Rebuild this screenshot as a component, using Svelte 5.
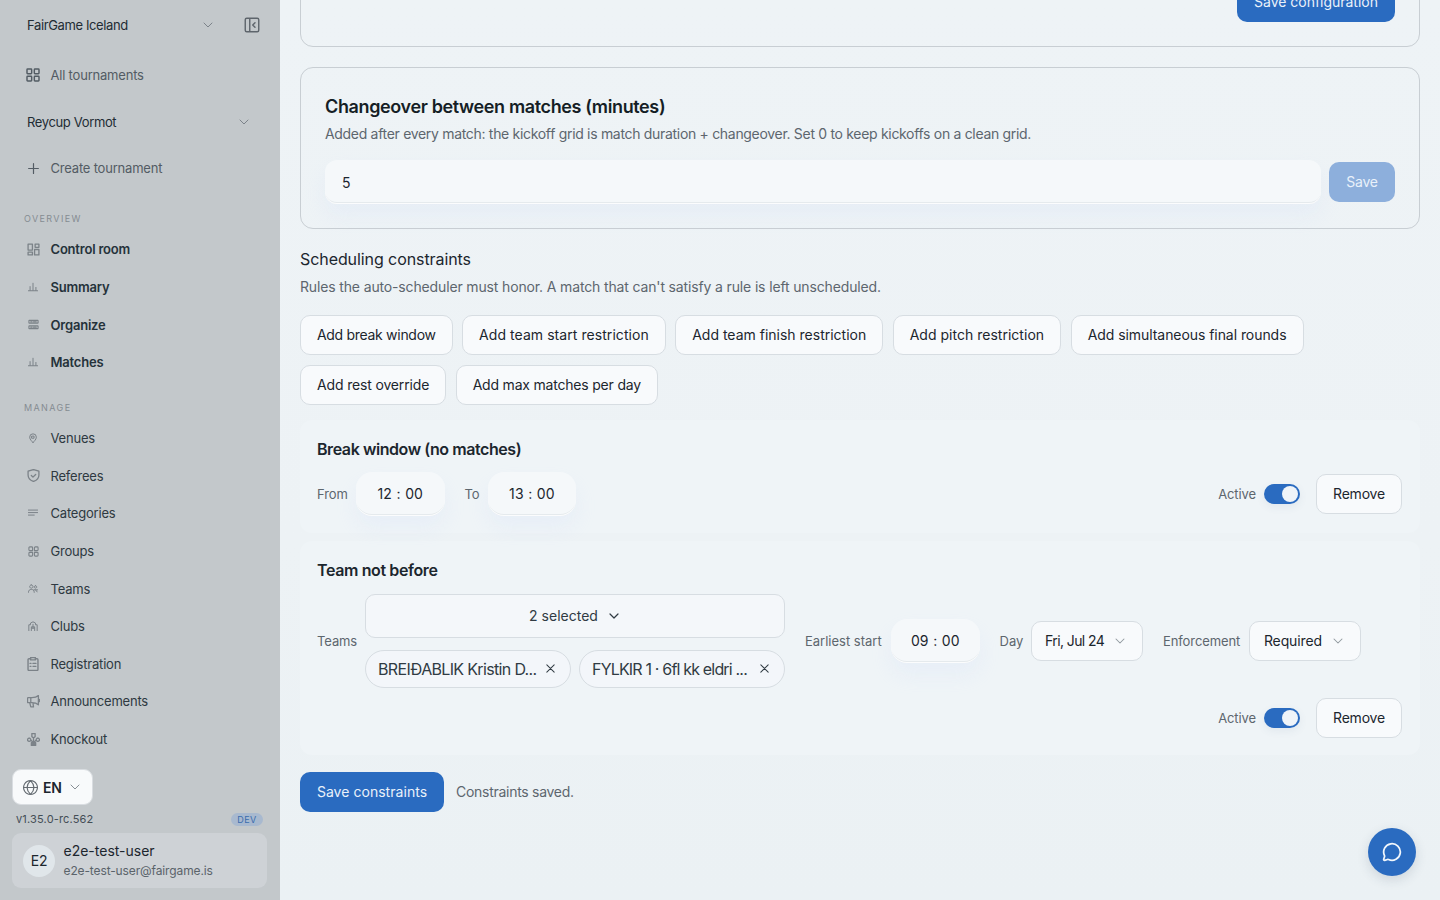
<script lang="ts">
  interface NavItem {
    label: string;
    icon: string;
    size?: number;
  }

  // 24x24 stroke icons
  const icons: Record<string, string> = {
    grid: 'M4 3h5a1 1 0 0 1 1 1v5a1 1 0 0 1-1 1H4a1 1 0 0 1-1-1V4a1 1 0 0 1 1-1zM15 3h5a1 1 0 0 1 1 1v5a1 1 0 0 1-1 1h-5a1 1 0 0 1-1-1V4a1 1 0 0 1 1-1zM4 14h5a1 1 0 0 1 1 1v5a1 1 0 0 1-1 1H4a1 1 0 0 1-1-1v-5a1 1 0 0 1 1-1zM15 14h5a1 1 0 0 1 1 1v5a1 1 0 0 1-1 1h-5a1 1 0 0 1-1-1v-5a1 1 0 0 1 1-1z',
    plus: 'M12 3v18M3 12h18',
    chevron: 'M4 8l8 8 8-8',
    collapse: 'M5 3h14a2 2 0 0 1 2 2v14a2 2 0 0 1-2 2H5a2 2 0 0 1-2-2V5a2 2 0 0 1 2-2zM9 3v18M16 9l-3 3 3 3',
    dashboard: 'M2 2h8v11H2zM15 2h7v6h-7zM14 12h8v10h-8zM2 17h8v5H2z',
    chart: 'M1 21h22M5 20v-9M12 20V3M19 20v-7',
    rows: 'M3 3h18a1 1 0 0 1 1 1v4a1 1 0 0 1-1 1H3a1 1 0 0 1-1-1V4a1 1 0 0 1 1-1zM3 15h18a1 1 0 0 1 1 1v4a1 1 0 0 1-1 1H3a1 1 0 0 1-1-1v-4a1 1 0 0 1 1-1zM6 6h3M12 6h6M6 18h3M12 18h6',
    pin: 'M12 23c-2-3-8-7-8-13a8 8 0 0 1 16 0c0 6-6 10-8 13zM9.500 7.500h5v5h-5z',
    shield: 'M12 1l10 3v7c0 6-4 10-10 12-6-2-10-6-10-12V4zM8 12l3 3 5-5',
    lines: 'M1 5h22M1 11h22M1 17h14',
    clover: 'M4 2h4a2 2 0 0 1 2 2v6H4a2 2 0 0 1-2-2V4a2 2 0 0 1 2-2zM16 2h4a2 2 0 0 1 2 2v4a2 2 0 0 1-2 2h-6V4a2 2 0 0 1 2-2zM4 14h6v6a2 2 0 0 1-2 2H4a2 2 0 0 1-2-2v-4a2 2 0 0 1 2-2zM14 14h6a2 2 0 0 1 2 2v4a2 2 0 0 1-2 2h-4a2 2 0 0 1-2-2z',
    people: 'M8 2a4 4 0 1 0 .01 0M18 4a3 3 0 1 0 .01 0M1 20c0-5 3-7 7-7s7 2 7 7M14 14h9M18 14l4 5',
    building: 'M2 23V9h4V5l6-3 6 3v4h4v14M8 23v-9h8v9M12 8v10M9 17h6',
    clipboard: 'M8 3H5a1.500 1.500 0 0 0-1.500 1.500v17A1.500 1.500 0 0 0 5 23h14a1.500 1.500 0 0 0 1.500-1.500v-17A1.500 1.500 0 0 0 19 3h-3M8 1h8v4H8zM7 11h1.500M12 11h5M7 16h1.500M12 16h5',
    megaphone: 'M2 5h7c5 0 9-1 12-4v17c-3-3-7-4-12-4H2a1 1 0 0 1-1-1V6a1 1 0 0 1 1-1zM7 5v9M5 14l2 8h5l-1-7M23 8v4',
    knockout: 'M9 1h6v6l-3 2-3-2zM4 9.500a3 3 0 1 0 .01 0M20 9.500a3 3 0 1 0 .01 0M8 18h8v5H8zM12 9v9M7 13l4 4M17 13l-4 4M10 20.500h4',
    globe: 'M12 1a11 11 0 1 0 .01 0M1 12h22M12 1c-7 7-7 15 0 22M12 1c7 7 7 15 0 22',
    close: 'M4 4l16 16M20 4L4 20',
    chat: 'M2.992 16.342a2 2 0 0 1 .094 1.167l-1.065 3.290a1 1 0 0 0 1.236 1.168l3.413-.998a2 2 0 0 1 1.099.092 10 10 0 1 0-4.777-4.719'
  };

  const overview: NavItem[] = [
    { label: 'Control room', icon: 'dashboard', size: 13 },
    { label: 'Summary', icon: 'chart', size: 10 },
    { label: 'Organize', icon: 'rows', size: 11 },
    { label: 'Matches', icon: 'chart', size: 10 }
  ];

  const manage: NavItem[] = [
    { label: 'Venues', icon: 'pin', size: 10 },
    { label: 'Referees', icon: 'shield', size: 13 },
    { label: 'Categories', icon: 'lines', size: 10 },
    { label: 'Groups', icon: 'clover', size: 11 },
    { label: 'Teams', icon: 'people', size: 10 },
    { label: 'Clubs', icon: 'building', size: 10 },
    { label: 'Registration', icon: 'clipboard', size: 14 },
    { label: 'Announcements', icon: 'megaphone', size: 13 },
    { label: 'Knockout', icon: 'knockout', size: 13 }
  ];

  const constraintTypes = [
    { label: 'Add break window', width: 152.6, tracking: -0.29 },
    { label: 'Add team start restriction', width: 203.5, tracking: 0.06 },
    { label: 'Add team finish restriction', width: 207.9, tracking: 0 },
    { label: 'Add pitch restriction', width: 168.2, tracking: 0.02 },
    { label: 'Add simultaneous final rounds', width: 233, tracking: -0.06 },
    { label: 'Add rest override', width: 146.2, tracking: -0.16 },
    { label: 'Add max matches per day', width: 202, tracking: -0.2 }
  ];

  let changeover = $state('5');
  let breakActive = $state(true);
  let teamActive = $state(true);
  let teams = $state([
    { name: 'BREIÐABLIK Kristin D...', tracking: -0.66 },
    { name: 'FYLKIR 1 · 6fl kk eldri ...', tracking: -0.82 }
  ]);
</script>

{#snippet icon(name: string, size = 14, stroke = 2)}
  <svg width={size} height={size} viewBox="0 0 24 24" fill="none" stroke="currentColor" stroke-width={stroke} stroke-linecap="round" stroke-linejoin="round">
    <path d={icons[name]} />
  </svg>
{/snippet}

{#snippet navLink(item: NavItem)}
  <a class="nav-item" href="#{item.icon}">
    <span class="nav-icon">{@render icon(item.icon, item.size, 2.4)}</span>
    <span>{item.label}</span>
  </a>
{/snippet}

{#snippet time(hours: string, minutes: string)}
  <div class="time"><span>{hours}</span><span class="colon">:</span><span>{minutes}</span></div>
{/snippet}

<div class="app">
  <aside class="sidebar">
    <div class="org">
      <span>FairGame Iceland</span>
      <span class="org-chevron">{@render icon('chevron', 12, 2)}</span>
      <button class="collapse" aria-label="Collapse sidebar">{@render icon('collapse', 18, 1.9)}</button>
    </div>
    <a class="top-link all" href="#all"><span class="nav-icon">{@render icon('grid', 16, 2.2)}</span><span>All tournaments</span></a>
    <div class="tournament">
      <span>Reycup Vormot</span>
      {@render icon('chevron', 12, 2)}
    </div>
    <a class="top-link create" href="#create"><span class="nav-icon">{@render icon('plus', 13, 2.2)}</span><span>Create tournament</span></a>

    <div class="nav-label">OVERVIEW</div>
    <nav class="strong">
      {#each overview as item}
        {@render navLink(item)}
      {/each}
    </nav>
    <div class="nav-label">MANAGE</div>
    <nav>
      {#each manage as item}
        {@render navLink(item)}
      {/each}
    </nav>

    <div class="footer">
      <button class="lang">
        <span class="globe">{@render icon('globe', 15, 1.8)}</span>
        <span>EN</span>
        <span class="lang-chevron">{@render icon('chevron', 12, 1.9)}</span>
      </button>
      <div class="version"><span>v1.35.0-rc.562</span><span class="env">DEV</span></div>
      <div class="user">
        <div class="avatar">E2</div>
        <div class="user-text">
          <div class="user-name">e2e-test-user</div>
          <div class="user-mail">e2e-test-user@fairgame.is</div>
        </div>
      </div>
    </div>
  </aside>

  <main>
    <section class="card config">
      <button class="btn primary">Save configuration</button>
    </section>

    <section class="card changeover">
      <h2>Changeover between matches (minutes)</h2>
      <p>Added after every match: the kickoff grid is match duration + changeover. Set 0 to keep kickoffs on a clean grid.</p>
      <div class="field-row">
        <input class="field" bind:value={changeover} aria-label="Changeover" />
        <button class="btn primary save" disabled>Save</button>
      </div>
    </section>

    <h3>Scheduling constraints</h3>
    <p class="hint">Rules the auto-scheduler must honor. A match that can't satisfy a rule is left unscheduled.</p>

    <div class="adders">
      {#each constraintTypes as type}
        <button class="btn" style="width: {type.width}px; letter-spacing: {type.tracking}px">{type.label}</button>
      {/each}
    </div>

    <section class="panel">
      <h4>Break window (no matches)</h4>
      <div class="controls">
        <div class="group"><span class="label from">From</span>{@render time('12', '00')}</div>
        <div class="group"><span class="label to">To</span>{@render time('13', '00')}</div>
        <div class="actions">
          <span class="label">Active</span>
          <button class="switch" class:on={breakActive} aria-label="Active" onclick={() => (breakActive = !breakActive)}></button>
          <button class="btn remove">Remove</button>
        </div>
      </div>
    </section>

    <section class="panel second">
      <h4>Team not before</h4>
      <div class="controls">
        <div class="group teams">
          <span class="label">Teams</span>
          <div class="picker">
            <button class="picker-btn"><span>2 selected</span>{@render icon('chevron', 12, 2.4)}</button>
            <div class="chips">
              {#each teams as team, i}
                <div class="chip">
                  <span style="letter-spacing: {team.tracking}px">{team.name}</span>
                  <button aria-label="Remove team" onclick={() => teams.splice(i, 1)}>{@render icon('close', 11, 2.2)}</button>
                </div>
              {/each}
            </div>
          </div>
        </div>
        <div class="group"><span class="label earliest">Earliest start</span>{@render time('09', '00')}</div>
        <div class="group"><span class="label day">Day</span><button class="select date"><span>Fri, Jul 24</span>{@render icon('chevron', 12, 2.1)}</button></div>
        <div class="group"><span class="label enforcement">Enforcement</span><button class="select level"><span>Required</span>{@render icon('chevron', 12, 2.1)}</button></div>
        <div class="actions">
          <span class="label">Active</span>
          <button class="switch" class:on={teamActive} aria-label="Active" onclick={() => (teamActive = !teamActive)}></button>
          <button class="btn remove">Remove</button>
        </div>
      </div>
    </section>

    <div class="save-row">
      <button class="btn primary save-all">Save constraints</button>
      <span>Constraints saved.</span>
    </div>
  </main>

  <button class="chat" aria-label="Open chat">{@render icon('chat', 20, 2.1)}</button>
</div>

<style>
  :global(body) {
    background: #edf2f5;
    overflow: hidden;
  }

  .app {
    display: flex;
    height: 900px;
    overflow: hidden;
    font-family: Inter, 'Noto Sans', sans-serif;
    font-size: 14px;
    color: #1c262e;
    background: linear-gradient(180deg, #eef3f6, #edf2f5 60%, #ebf1f4);
  }

  .app *,
  .app *::after {
    box-sizing: border-box;
  }

  svg {
    display: block;
    flex-shrink: 0;
  }

  button,
  input {
    font: inherit;
    color: inherit;
    letter-spacing: inherit;
    margin: 0;
    padding: 0;
    border: 0;
    background: none;
  }

  a {
    color: inherit;
    text-decoration: none;
  }

  h2,
  h3,
  h4,
  p {
    margin: 0;
  }

  /* Sidebar */
  .sidebar {
    width: 280px;
    flex-shrink: 0;
    display: flex;
    flex-direction: column;
    background: #c3c8cb;
    font-size: 13px;
    letter-spacing: -0.2px;
  }

  .org {
    display: flex;
    align-items: center;
    height: 50px;
    padding: 0 19px 0 27px;
    letter-spacing: -0.38px;
    color: #222c34;
  }

  .org-chevron {
    margin-left: auto;
    margin-right: 29px;
    color: #7c838a;
  }

  .collapse {
    color: #5e656c;
  }

  .top-link,
  .nav-item {
    display: flex;
    align-items: center;
    gap: 9.5px;
    padding-left: 25px;
  }

  .top-link {
    color: #535c64;
  }

  .all {
    height: 50px;
  }

  .create {
    height: 48px;
  }

  .nav-icon {
    display: flex;
    justify-content: center;
    width: 16px;
  }

  .nav-item .nav-icon {
    color: #7b8288;
  }

  .tournament {
    display: flex;
    align-items: center;
    justify-content: space-between;
    height: 44px;
    padding: 0 30px 0 27px;
    letter-spacing: -0.36px;
    color: #222c34;
  }

  .tournament svg {
    color: #7c838a;
  }

  .nav-label {
    height: 38.57px;
    padding: 0 24px;
    line-height: 54px;
    font-size: 9px;
    letter-spacing: 1.38px;
    color: #858c92;
  }

  .nav-item {
    height: 37.6px;
    color: #2e3941;
  }

  .strong {
    font-weight: 600;
    letter-spacing: -0.2px;
  }

  .strong .nav-item {
    color: #25323a;
  }

  .footer {
    margin: auto 13px 12px 12px;
  }

  .lang {
    display: flex;
    align-items: center;
    width: 81px;
    height: 36px;
    padding: 0 10px;
    border: 1px solid #d9dde1;
    border-radius: 9px;
    background: #f8fafb;
    font-size: 14px;
    font-weight: 600;
  }

  .globe {
    margin-right: 5px;
    color: #656c72;
  }

  .lang-chevron {
    margin-left: 7px;
    color: #82898f;
  }

  .version {
    display: flex;
    align-items: center;
    justify-content: space-between;
    height: 28px;
    padding: 0 4px;
    font-size: 11px;
    letter-spacing: 0.17px;
    color: #444e56;
  }

  .env {
    width: 32px;
    border-radius: 7px;
    background: #a8b9cf;
    color: #3a6cad;
    font-size: 9px;
    line-height: 13px;
    letter-spacing: 0.5px;
    text-align: center;
  }

  .user {
    display: flex;
    align-items: center;
    gap: 8.5px;
    height: 55px;
    padding: 0 11px;
    border-radius: 9px;
    background: #ced2d6;
  }

  .avatar {
    width: 32px;
    height: 32px;
    border-radius: 50%;
    background: #e0e6ea;
    line-height: 32px;
    text-align: center;
    font-size: 14px;
  }

  .user-name {
    font-size: 14px;
    line-height: 20px;
    letter-spacing: 0;
  }

  .user-mail {
    font-size: 12px;
    line-height: 19px;
    letter-spacing: -0.12px;
    color: #5a636a;
  }

  /* Main */
  main {
    flex: 1;
    padding: 0 20px;
    letter-spacing: -0.2px;
  }

  .card {
    border: 1px solid #c8ced3;
    border-radius: 13px;
  }

  .config {
    display: flex;
    justify-content: flex-end;
    align-items: flex-start;
    height: 66px;
    margin-top: -19px;
    padding-right: 24px;
  }

  .btn {
    height: 40px;
    border: 1px solid #d7dde2;
    border-radius: 10px;
    background: #f8fafc;
    white-space: nowrap;
    text-align: center;
  }

  .btn.primary {
    border: 0;
    background: #2a6bc0;
    color: #e9f1fa;
  }

  .config .btn {
    width: 158px;
    padding-bottom: 1px;
    letter-spacing: -0.02px;
  }

  .changeover {
    margin-top: 20px;
    height: 162px;
    padding: 25px 24px 24px;
  }

  h2 {
    font-size: 18px;
    line-height: 28px;
    font-weight: 600;
    letter-spacing: -0.37px;
    color: #151e25;
  }

  p {
    line-height: 20px;
    color: #5d666e;
  }

  .changeover p {
    margin-top: 3px;
    letter-spacing: -0.31px;
  }

  .field-row {
    display: flex;
    align-items: center;
    gap: 8px;
    margin-top: 16px;
  }

  .field,
  .time {
    height: 44px;
    background: #f5f8fa;
    box-shadow:
      inset 0 -1px 0 #fbfcfd,
      inset 0 -3px 0 -1px #e5eaed,
      0 12px 20px rgba(205, 222, 250, 0.2);
  }

  .field {
    flex: 1;
    padding: 0 17px;
    border-radius: 12px;
  }

  .btn.save {
    width: 66px;
    padding-bottom: 2px;
    background: #8dafdc;
  }

  h3 {
    margin-top: 18px;
    font-size: 16px;
    line-height: 24px;
    font-weight: 400;
    letter-spacing: -0.08px;
  }

  .hint {
    margin-top: 6px;
    letter-spacing: -0.145px;
  }

  .adders {
    display: flex;
    flex-wrap: wrap;
    gap: 10px 9.6px;
    margin-top: 17.6px;
  }

  .panel {
    margin-top: 15.4px;
    padding: 17px 18px 17px 17px;
    border-radius: 12px;
    background: #eff4f7;
  }

  .panel.second {
    margin-top: 8px;
  }

  h4 {
    margin-bottom: 11px;
    font-size: 16px;
    line-height: 24px;
    font-weight: 600;
    letter-spacing: -0.43px;
  }

  .second h4 {
    margin-bottom: 12px;
    letter-spacing: -0.38px;
  }

  .controls {
    display: flex;
    flex-wrap: wrap;
    align-items: center;
    row-gap: 10px;
  }

  .group {
    display: flex;
    align-items: center;
    gap: 8px;
    margin-right: 20px;
  }

  .label {
    font-size: 13px;
    letter-spacing: -0.1px;
    white-space: nowrap;
    color: #5d666e;
  }

  .from {
    width: 31px;
  }

  .to {
    width: 15px;
  }

  .earliest {
    width: 78px;
    letter-spacing: 0;
  }

  .day {
    width: 23px;
  }

  .enforcement {
    width: 78.4px;
  }

  .time {
    display: flex;
    align-items: center;
    justify-content: center;
    gap: 4.5px;
    width: 88.6px;
    border-radius: 16px;
    letter-spacing: 0.1px;
  }

  .colon {
    line-height: 18px;
  }

  .actions {
    display: flex;
    align-items: center;
    gap: 8px;
    margin-left: auto;
  }

  .switch {
    width: 36px;
    height: 20px;
    padding: 2px;
    border-radius: 10px;
    background: #b6bec6;
    box-shadow: 0 3px 8px rgba(60, 90, 130, 0.08);
  }

  .switch::after {
    content: '';
    display: block;
    width: 16px;
    height: 16px;
    border-radius: 50%;
    background: #eff4f9;
  }

  .switch.on {
    background: #2a6bc0;
  }

  .switch.on::after {
    margin-left: 16px;
  }

  .remove {
    width: 86px;
    margin-left: 8px;
  }

  .teams .label {
    width: 40px;
  }

  .picker {
    width: 420px;
  }

  .picker-btn {
    display: flex;
    align-items: center;
    justify-content: center;
    gap: 10px;
    width: 100%;
    height: 44px;
    padding-right: 1px;
    border: 1px solid #d7dde2;
    border-radius: 10px;
    background: #f4f7fa;
    letter-spacing: 0;
    color: #303b43;
  }

  .chips {
    display: flex;
    gap: 8px;
    margin-top: 12px;
  }

  .chip {
    display: flex;
    align-items: center;
    justify-content: space-between;
    width: 206px;
    height: 38px;
    padding: 0 14px 0 12px;
    border: 1px solid #d7dde2;
    border-radius: 19px;
    background: #f3f6fa;
    font-size: 16px;
    white-space: nowrap;
    color: #303b43;
  }

  .select {
    display: flex;
    align-items: center;
    justify-content: space-between;
    height: 40px;
    padding: 0 16px 0 13.5px;
    border: 1px solid #d7dde2;
    border-radius: 10px;
    background: #f8fafc;
    white-space: nowrap;
  }

  .select svg {
    color: #90979e;
  }

  .date {
    width: 112.4px;
    letter-spacing: -0.6px;
  }

  .level {
    width: 112px;
    letter-spacing: -0.1px;
  }

  .save-row {
    display: flex;
    align-items: center;
    gap: 12px;
    margin-top: 17px;
    letter-spacing: -0.28px;
    color: #5d666e;
  }

  .save-all {
    width: 144px;
    letter-spacing: 0.04px;
  }

  .chat {
    position: fixed;
    right: 24px;
    bottom: 24px;
    display: flex;
    align-items: center;
    justify-content: center;
    width: 48px;
    height: 48px;
    border-radius: 50%;
    background: #2a6bc0;
    color: #f2f7fc;
    box-shadow: 0 4px 12px rgba(40, 60, 90, 0.15);
  }
</style>
